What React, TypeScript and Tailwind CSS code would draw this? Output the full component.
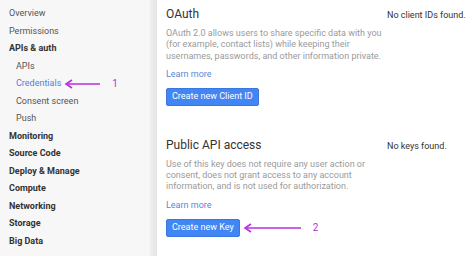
import React from 'react';

const font = { fontFamily: 'Roboto, "Liberation Sans", sans-serif' };

function NavItem({
  label,
  bold,
  sub,
  active,
  children,
}: {
  label: string;
  bold?: boolean;
  sub?: boolean;
  active?: boolean;
  children?: React.ReactNode;
}) {
  return (
    <div
      className={`h-[17.5px] flex items-center text-[9px] ${sub ? 'pl-[16px]' : 'pl-[9px]'} ${
        bold ? 'font-bold text-[#333]' : active ? 'text-[#4f7fe0]' : 'text-[#555]'
      }`}
    >
      <span>{label}</span>
      {children}
    </div>
  );
}

function Arrow({ width }: { width: number }) {
  return (
    <svg width={width} height="10" viewBox={`0 0 ${width} 10`} className="block">
      <path d={`M2 5 H${width}`} stroke="#b82ee0" strokeWidth="1.6" />
      <path d="M8 1 L2 5 L8 9" stroke="#b82ee0" strokeWidth="1.6" fill="none" />
    </svg>
  );
}

function Section({
  title,
  lines,
  button,
  right,
  arrow,
}: {
  title: string;
  lines: string[];
  button: string;
  right: string;
  arrow?: React.ReactNode;
}) {
  return (
    <div className="flex">
      <div className="w-[221px]">
        <div className="text-[12px] leading-[16px] text-[#333]">{title}</div>
        <div className="mt-[6px] text-[9px] leading-[11.3px] text-[#9a9a9a]">
          {lines.map((l) => (
            <div key={l} className="whitespace-nowrap">{l}</div>
          ))}
        </div>
        <div className="mt-[7px] text-[9px] leading-[11px] text-[#5a86d8]">Learn more</div>
        <div className="mt-[8px] flex items-center">
          <button className="h-[18px] px-[5px] rounded-[2px] bg-[#4285f4] border border-[#3a78e0] text-white text-[9px] leading-none">
            {button}
          </button>
          {arrow}
        </div>
      </div>
      <div className="pt-[4px] text-[9px] leading-[11px] text-[#333]">{right}</div>
    </div>
  );
}

export default function App() {
  return (
    <div className="w-[474px] h-[256px] flex bg-white overflow-hidden" style={font}>
      <aside className="w-[150px] bg-[#f7f7f7] pt-[5px] shrink-0">
        <NavItem label="Overview" />
        <NavItem label="Permissions" />
        <NavItem label="APIs & auth" bold />
        <NavItem label="APIs" sub />
        <NavItem label="Credentials" sub active>
          <span className="ml-[3px]">
            <Arrow width={36} />
          </span>
          <span className="ml-[12px] text-[10px] text-[#b82ee0]">1</span>
        </NavItem>
        <NavItem label="Consent screen" sub />
        <NavItem label="Push" sub />
        <NavItem label="Monitoring" bold />
        <NavItem label="Source Code" bold />
        <NavItem label="Deploy & Manage" bold />
        <NavItem label="Compute" bold />
        <NavItem label="Networking" bold />
        <NavItem label="Storage" bold />
        <NavItem label="Big Data" bold />
      </aside>
      <div className="w-[7px] shrink-0 bg-gradient-to-r from-[#efefef] to-[#e4e4e4]" />
      <main className="flex-1 pl-[9px] pt-[6px] flex flex-col gap-[31px]">
        <Section
          title="OAuth"
          lines={[
            'OAuth 2.0 allows users to share specific data with you',
            '(for example, contact lists) while keeping their',
            'usernames, passwords, and other information private.',
          ]}
          button="Create new Client ID"
          right="No client IDs found."
        />
        <Section
          title="Public API access"
          lines={[
            'Use of this key does not require any user action or',
            'consent, does not grant access to any account',
            'information, and is not used for authorization.',
          ]}
          button="Create new Key"
          right="No keys found."
          arrow={
            <>
              <span className="ml-[3px]">
                <Arrow width={58} />
              </span>
              <span className="ml-[12px] text-[10px] text-[#b82ee0]">2</span>
            </>
          }
        />
      </main>
    </div>
  );
}
